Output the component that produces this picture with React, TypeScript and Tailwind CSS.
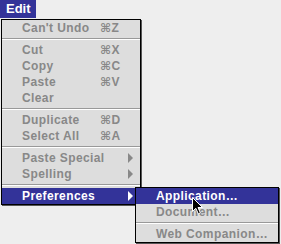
import React from "react";

type Item =
  | { kind: "item"; label: string; key?: string; sub?: boolean; on?: boolean }
  | { kind: "sep" };

const EDIT_ITEMS: Item[] = [
  { kind: "item", label: "Can't Undo", key: "⌘Z" },
  { kind: "sep" },
  { kind: "item", label: "Cut", key: "⌘X" },
  { kind: "item", label: "Copy", key: "⌘C" },
  { kind: "item", label: "Paste", key: "⌘V" },
  { kind: "item", label: "Clear" },
  { kind: "sep" },
  { kind: "item", label: "Duplicate", key: "⌘D" },
  { kind: "item", label: "Select All", key: "⌘A" },
  { kind: "sep" },
  { kind: "item", label: "Paste Special", sub: true },
  { kind: "item", label: "Spelling", sub: true },
  { kind: "sep" },
  { kind: "item", label: "Preferences", sub: true, on: true },
];

const PREF_ITEMS: Item[] = [
  { kind: "item", label: "Application…", on: true },
  { kind: "item", label: "Document…" },
  { kind: "sep" },
  { kind: "item", label: "Web Companion…" },
];

function Separator() {
  return (
    <div className="h-[6px] flex flex-col justify-center">
      <div className="h-px bg-[#999999]" />
      <div className="h-px bg-white" />
    </div>
  );
}

function Row({ item }: { item: Extract<Item, { kind: "item" }> }) {
  const text = item.on ? "text-white" : "text-[#888888]";
  return (
    <div className={`h-[16px] flex items-center ${item.on ? "bg-[#333399]" : ""} ${text}`}>
      <span className="pl-[20px] w-[98px] shrink-0 whitespace-nowrap">{item.label}</span>
      {item.key && <span className="whitespace-nowrap">{item.key}</span>}
      {item.sub && (
        <span
          className={`ml-[28px] w-0 h-0 border-y-[5px] border-y-transparent border-l-[5px] ${
            item.on ? "border-l-white" : "border-l-[#888888]"
          }`}
        />
      )}
    </div>
  );
}

function Menu({ items, className }: { items: Item[]; className: string }) {
  return (
    <div className={`absolute border border-black bg-[#dddddd] shadow-[1px_1px_0_#555555] ${className}`}>
      {items.map((it, i) =>
        it.kind === "sep" ? <Separator key={i} /> : <Row key={i} item={it} />
      )}
    </div>
  );
}

function Cursor() {
  return (
    <svg className="absolute left-[192px] top-[197px]" width="12" height="18" viewBox="0 0 12 18">
      <path
        d="M0.5 0.5 L0.5 14.5 L3.8 11.3 L6.3 16.8 L8.4 15.9 L6 10.5 L10.5 10.5 Z"
        fill="#000"
        stroke="#fff"
        strokeWidth="1"
      />
    </svg>
  );
}

export default function App() {
  return (
    <div className="relative w-[281px] h-[244px] overflow-hidden bg-[#eeeeee] font-['Liberation_Sans','DejaVu_Sans',sans-serif] text-[12px] font-bold leading-[16px] tracking-[0.4px]">
      {/* Menu bar */}
      <div className="flex h-[18px]">
        <div className="w-[36px] bg-[#333399] text-white pl-[6px] leading-[18px] text-[13px] tracking-normal">Edit</div>
      </div>

      <Menu items={EDIT_ITEMS} className="left-[1px] top-[19px] w-[140px]" />
      <Menu items={PREF_ITEMS} className="left-[135px] top-[187px] w-[144px]" />
      <Cursor />
    </div>
  );
}
